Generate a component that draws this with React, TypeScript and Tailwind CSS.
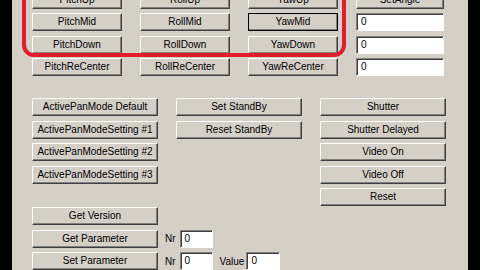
const btn =
  'flex items-center justify-center h-[18px] bg-[#d4d0c8] border border-t-white border-l-white border-r-[#404040] border-b-[#404040] shadow-[inset_-1px_-1px_0_#808080] text-black whitespace-nowrap leading-none';
const field =
  'flex items-center h-[18px] bg-white border border-t-[#808080] border-l-[#808080] border-r-white border-b-white shadow-[inset_1px_1px_0_#404040] pl-[4px] text-black leading-none';

function Btn({ label, def }: { label: string; def?: boolean }) {
  return (
    <div className={def ? `${btn} outline outline-1 outline-black -outline-offset-1` : btn}>
      {label}
    </div>
  );
}

function Field({ className = '' }: { className?: string }) {
  return <div className={`${field} ${className}`}>0</div>;
}

export default function App() {
  return (
    <div className="relative flex w-[480px] h-[270px] overflow-hidden bg-black font-['Liberation_Sans',Arial,sans-serif] text-[10px]">
      <div className="w-[12px] shrink-0 bg-black" />
      <div className="w-[456px] shrink-0 bg-[#d4d0c8] pl-[20px] flex flex-col">
        {/* axis rows */}
        <div className="mt-[-9.5px] grid grid-cols-[90px_90px_90px_88px] auto-rows-[18px] gap-x-[18px] gap-y-[4.5px]">
          <Btn label="PitchUp" />
          <Btn label="RollUp" />
          <Btn label="YawUp" />
          <Btn label="SetAngle" />
          <Btn label="PitchMid" />
          <Btn label="RollMid" />
          <Btn label="YawMid" def />
          <Field />
          <Btn label="PitchDown" />
          <Btn label="RollDown" />
          <Btn label="YawDown" />
          <Field />
          <Btn label="PitchReCenter" />
          <Btn label="RollReCenter" />
          <Btn label="YawReCenter" />
          <Field />
        </div>

        {/* modes */}
        <div className="mt-[22px] grid grid-cols-[126px_126px_126px] auto-rows-[18px] gap-x-[18px] gap-y-[4.5px]">
          <Btn label="ActivePanMode Default" />
          <Btn label="Set StandBy" />
          <Btn label="Shutter" />
          <Btn label="ActivePanModeSetting #1" />
          <Btn label="Reset StandBy" />
          <Btn label="Shutter Delayed" />
          <Btn label="ActivePanModeSetting #2" />
          <div />
          <Btn label="Video On" />
          <Btn label="ActivePanModeSetting #3" />
          <div />
          <Btn label="Video Off" />
          <div />
          <div />
          <Btn label="Reset" />
        </div>

        {/* parameters */}
        <div className="mt-[1px] flex flex-col gap-[4.5px]">
          <div className="flex items-center">
            <div className="w-[126px]"><Btn label="Get Version" /></div>
          </div>
          <div className="flex items-center">
            <div className="w-[126px]"><Btn label="Get Parameter" /></div>
            <span className="ml-[7px]">Nr</span>
            <Field className="ml-[4px] w-[33px]" />
          </div>
          <div className="flex items-center">
            <div className="w-[126px]"><Btn label="Set Parameter" /></div>
            <span className="ml-[7px]">Nr</span>
            <Field className="ml-[4px] w-[33px]" />
            <span className="ml-[7px]">Value</span>
            <Field className="ml-[2px] w-[34px]" />
          </div>
        </div>
      </div>

      {/* red annotation drawn over the screenshot */}
      <div className="absolute left-[22px] top-[-20px] w-[324px] h-[77px] border-4 border-[#e11d2a] rounded-[12px] pointer-events-none" />
    </div>
  );
}
